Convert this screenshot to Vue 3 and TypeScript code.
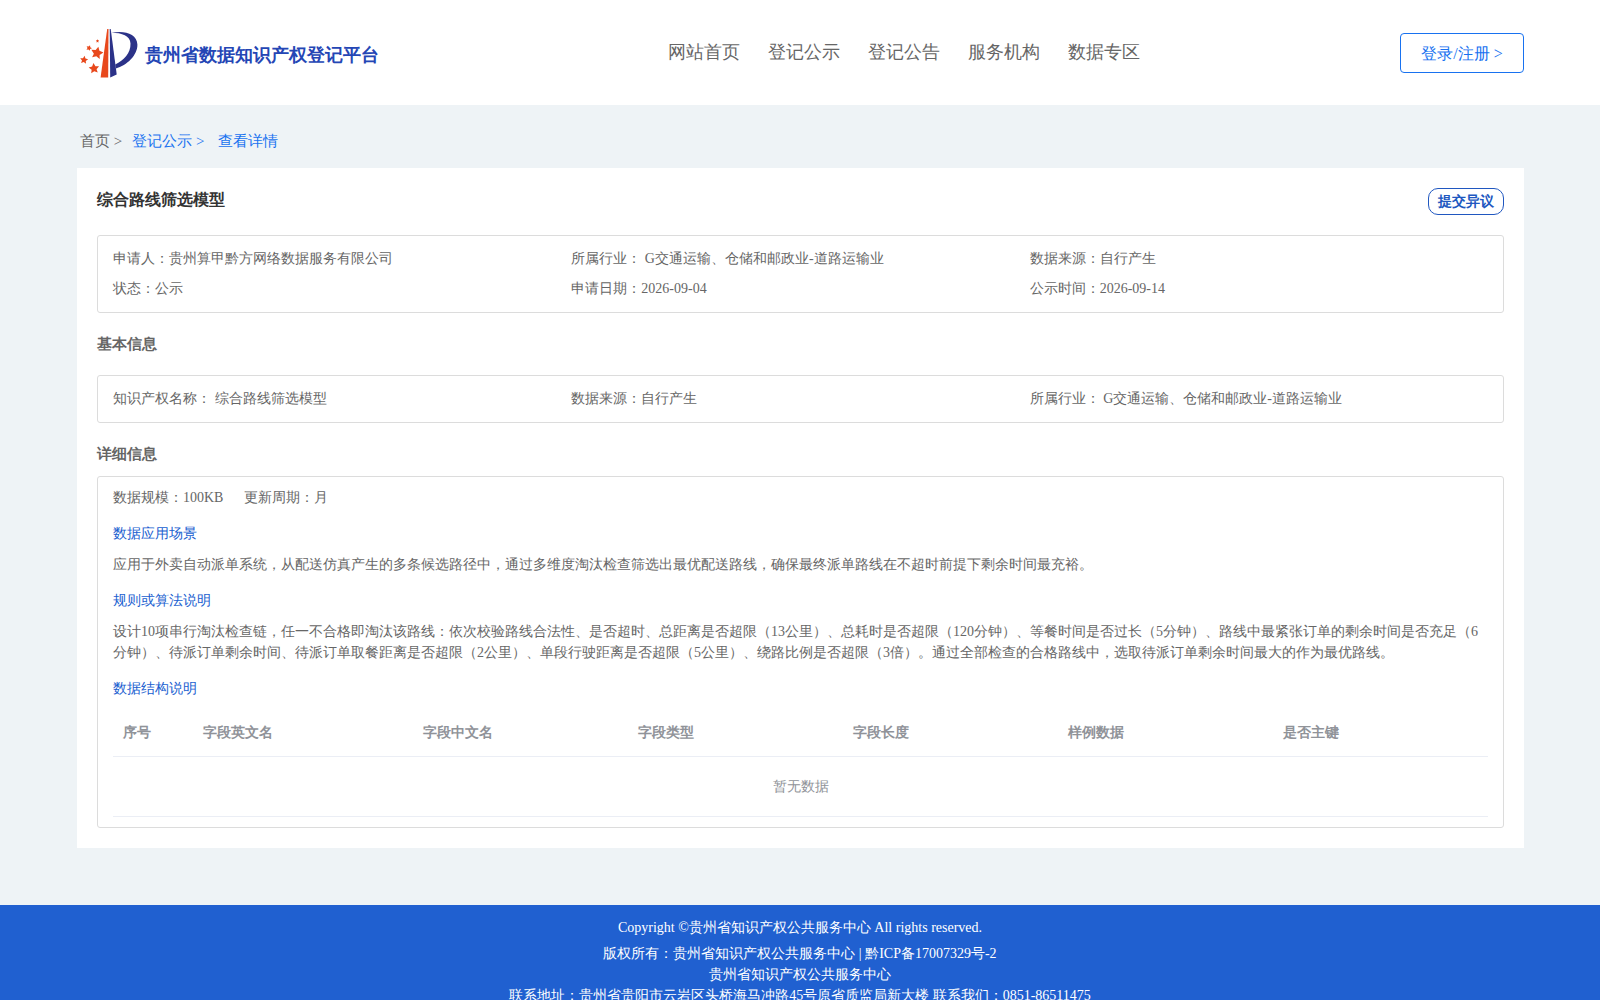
<script setup lang="ts">
interface Field {
  label: string
  value: string
}

interface Star {
  x: number
  y: number
  scale: number
  turn: number
}

const starPoints =
  '0,-10 3,-4 9.5,-3 4.5,2 6,8 0,5 -6,8 -4.5,2 -9.5,-3 -3,-4'

const stars: Star[] = [
  { x: 17, y: 25, scale: 0.65, turn: 12 },
  { x: 14, y: 40.5, scale: 0.55, turn: -6 },
  { x: 4, y: 32, scale: 0.42, turn: 8 },
  { x: 9, y: 20, scale: 0.3, turn: 20 },
  { x: 17.5, y: 13, scale: 0.18, turn: 0 },
]

const navItems: string[] = ['网站首页', '登记公示', '登记公告', '服务机构', '数据专区']

const summary: Field[] = [
  { label: '申请人：', value: '贵州算甲黔方网络数据服务有限公司' },
  { label: '所属行业： ', value: 'G交通运输、仓储和邮政业-道路运输业' },
  { label: '数据来源：', value: '自行产生' },
  { label: '状态：', value: '公示' },
  { label: '申请日期：', value: '2026-09-04' },
  { label: '公示时间：', value: '2026-09-14' },
]

const basics: Field[] = [
  { label: '知识产权名称： ', value: '综合路线筛选模型' },
  { label: '数据来源：', value: '自行产生' },
  { label: '所属行业： ', value: 'G交通运输、仓储和邮政业-道路运输业' },
]

const scene =
  '应用于外卖自动派单系统，从配送仿真产生的多条候选路径中，通过多维度淘汰检查筛选出最优配送路线，确保最终派单路线在不超时前提下剩余时间最充裕。'

const algorithm =
  '设计10项串行淘汰检查链，任一不合格即淘汰该路线：依次校验路线合法性、是否超时、总距离是否超限（13公里）、总耗时是否超限（120分钟）、等餐时间是否过长（5分钟）、路线中最紧张订单的剩余时间是否充足（6分钟）、待派订单剩余时间、待派订单取餐距离是否超限（2公里）、单段行驶距离是否超限（5公里）、绕路比例是否超限（3倍）。通过全部检查的合格路线中，选取待派订单剩余时间最大的作为最优路线。'

const columns: string[] = ['序号', '字段英文名', '字段中文名', '字段类型', '字段长度', '样例数据', '是否主键']
</script>

<template>
  <div class="page">
    <header class="header">
      <a class="brand" href="#">
        <svg class="logo" viewBox="0 0 58 50" aria-hidden="true">
          <path d="M27.200 1h1.300l-.3 48.500H20.600z" fill="#e8481c" />
          <path d="M29.700 1h1l6 45.500-6.500 3z" fill="#2b3288" />
          <path
            d="M31.500 4.800C44 2 57 5.500 57.400 16.500 57.700 27 47 37.500 35.800 40.500l-.6-4C44 32.500 50.800 25 50.500 15.500 50.200 8 42 4.800 31.500 4.800z"
            fill="#2b3288"
          />
          <polygon
            v-for="s in stars"
            :key="s.y"
            :points="starPoints"
            :transform="`translate(${s.x} ${s.y}) rotate(${s.turn}) scale(${s.scale})`"
            fill="#e8481c"
          />
        </svg>
        <span class="brand-name">贵州省数据知识产权登记平台</span>
      </a>
      <nav class="nav">
        <a v-for="item in navItems" :key="item" href="#">{{ item }}</a>
      </nav>
      <button class="login" type="button">登录/注册 &gt;</button>
    </header>

    <main class="main">
      <nav class="crumbs">
        <a class="crumb home" href="#">首页 &gt;</a>
        <a class="crumb" href="#">登记公示 &gt;</a>
        <a class="crumb current" href="#">查看详情</a>
      </nav>

      <section class="card">
        <div class="card-head">
          <h1>综合路线筛选模型</h1>
          <button class="objection" type="button">提交异议</button>
        </div>

        <div class="box fields">
          <div v-for="f in summary" :key="f.label" class="field">{{ f.label }}{{ f.value }}</div>
        </div>

        <h2 class="basic-title">基本信息</h2>
        <div class="box fields">
          <div v-for="f in basics" :key="f.label" class="field">{{ f.label }}{{ f.value }}</div>
        </div>

        <h2 class="detail-title">详细信息</h2>
        <div class="box detail">
          <div class="scale">
            <span>数据规模：100KB</span>
            <span>更新周期：月</span>
          </div>
          <h3>数据应用场景</h3>
          <p>{{ scene }}</p>
          <h3>规则或算法说明</h3>
          <p>{{ algorithm }}</p>
          <h3>数据结构说明</h3>
          <table class="table">
            <colgroup>
              <col class="col-index" />
              <col class="col-name" />
              <col v-for="n in 5" :key="n" />
            </colgroup>
            <thead>
              <tr>
                <th v-for="c in columns" :key="c" scope="col">{{ c }}</th>
              </tr>
            </thead>
            <tbody>
              <tr>
                <td :colspan="columns.length">暂无数据</td>
              </tr>
            </tbody>
          </table>
        </div>
      </section>
    </main>

    <footer class="footer">
      <p class="copyright">Copyright ©贵州省知识产权公共服务中心 All rights reserved.</p>
      <p>版权所有：贵州省知识产权公共服务中心 | 黔ICP备17007329号-2</p>
      <p>贵州省知识产权公共服务中心</p>
      <p>联系地址：贵州省贵阳市云岩区头桥海马冲路45号原省质监局新大楼 联系我们：0851-86511475</p>
    </footer>
  </div>
</template>

<style>
body {
  margin: 0;
  background: #eef3f6;
}
</style>

<style scoped>
.page {
  font-family: "Liberation Serif", serif;
  font-size: 14px;
  line-height: 21px;
  color: #666;
}

.page * {
  box-sizing: border-box;
}

a {
  color: inherit;
  text-decoration: none;
}

button {
  font-family: inherit;
  background: #fff;
  cursor: pointer;
}

h1,
h2,
h3,
p {
  margin: 0;
}

.header {
  display: flex;
  align-items: center;
  justify-content: space-between;
  height: 105px;
  padding: 0 76px 0 77px;
  background: #fff;
}

.brand {
  display: flex;
  align-items: center;
  gap: 7px;
  flex: 0 0 330px;
  padding-left: 3px;
}

.logo {
  width: 58px;
  height: 50px;
}

.brand-name {
  font-size: 18px;
  font-weight: bold;
  line-height: 24px;
  color: #2446b5;
  padding-top: 4px;
}

.nav {
  display: flex;
  gap: 28px;
  font-size: 18px;
  line-height: 24px;
  padding-bottom: 2px;
}

.login {
  min-width: 124px;
  height: 40px;
  padding: 4px 20px 0;
  border: 1px solid #1872f0;
  border-radius: 4px;
  font-size: 16px;
  color: #1872f0;
}

.main {
  padding: 0 76px 57px 77px;
}

.crumbs {
  display: flex;
  gap: 10px;
  height: 63px;
  padding: 26px 3px 0;
  font-size: 15px;
  color: #1872f0;
}

.crumb.home {
  color: #666;
}

.crumb.current {
  padding-left: 4px;
}

.card {
  padding: 20px;
  background: #fff;
}

.card-head {
  display: flex;
  justify-content: space-between;
  align-items: flex-start;
  height: 47px;
}

h1 {
  font-size: 16px;
  line-height: 24px;
  color: #333;
}

.objection {
  height: 27px;
  padding: 0 9px;
  border: 1px solid #2057c0;
  border-radius: 10px;
  font-size: 14px;
  font-weight: bold;
  color: #2057c0;
}

.box {
  border: 1px solid #dcdcdc;
  border-radius: 3px;
}

.fields {
  display: grid;
  grid-template-columns: repeat(3, 1fr);
  padding: 8px 15px;
}

.field {
  line-height: 30px;
}

h2 {
  font-size: 15px;
  line-height: 22px;
}

.basic-title {
  padding: 20px 0;
}

.detail-title {
  padding: 20px 0 11px;
}

.detail {
  padding: 10px 15px;
}

.scale {
  display: flex;
  gap: 21px;
}

h3 {
  margin: 15px 0 10px;
  font-size: 14px;
  font-weight: normal;
  color: #2060d0;
}

.table {
  width: 100%;
  table-layout: fixed;
  border-collapse: separate;
  border-spacing: 0;
  color: #909399;
}

.col-index {
  width: 80px;
}

.col-name {
  width: 220px;
}

th {
  height: 48px;
  padding: 0 10px;
  border-bottom: 1px solid #ebeef5;
  text-align: left;
}

td {
  height: 60px;
  padding: 0 10px;
  border-bottom: 1px solid #ebeef5;
  text-align: center;
}

.footer {
  padding: 12px 0 20px;
  background: #2060d0;
  color: #fff;
  text-align: center;
}

.copyright {
  margin-bottom: 5px;
}
</style>
